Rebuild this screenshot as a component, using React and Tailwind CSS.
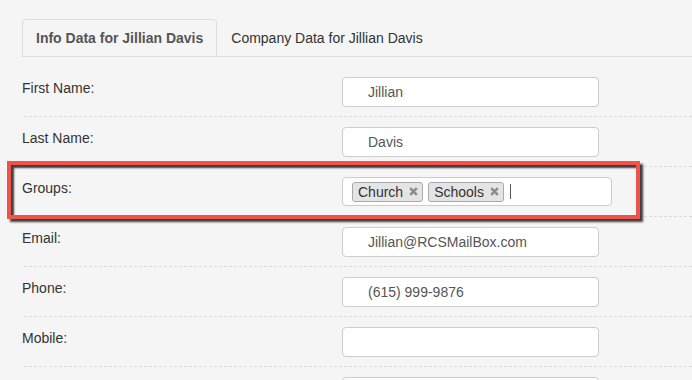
import React from "react";

function XIcon() {
  return (
    <svg width="9" height="9" viewBox="0 0 9 9" className="block">
      <path d="M1.2 1.2 L7.8 7.8 M7.8 1.2 L1.2 7.8" stroke="#8a8a8a" strokeWidth="2.4" strokeLinecap="butt" />
    </svg>
  );
}

function Tag({ label }) {
  return (
    <div className="flex h-[20px] items-center rounded-[3px] border border-[#aaa] bg-[#e4e4e4] pl-[5px] pr-[4px] text-[#333] leading-none">
      <span>{label}</span>
      <span className="ml-[6px]">
        <XIcon />
      </span>
    </div>
  );
}

function Row({ label, value, children, overlay }) {
  return (
    <div className="relative flex items-start bg-[linear-gradient(to_right,#cfcfcf_2px,transparent_2px)] bg-[length:5px_1px] bg-bottom bg-repeat-x pt-[10px] pb-[10px]">
      <div className="w-[320px] pt-px leading-5 text-[#333]">{label}</div>
      {children ? (
        children
      ) : (
        <div className="h-[30px] w-[257px] rounded-[4px] border border-[#ccc] bg-white pl-[25px] leading-[28px] text-[#555]">
          {value}
        </div>
      )}
      {overlay}
    </div>
  );
}

export default function App() {
  return (
    <div className="h-[380px] overflow-hidden bg-[#f5f5f5] pl-[22px] pt-[19px] font-['Liberation_Sans',Arial,sans-serif] text-[14px]">
      <div className="flex border-b border-[#ddd]">
        <div className="mr-[2px] rounded-t-[4px] border border-b-0 border-[#ddd] px-[13px] py-2 font-bold leading-5 text-[#555]">
          Info Data for Jillian Davis
        </div>
        <div className="border border-b-0 border-transparent px-[11px] py-2 leading-5 text-[#333]">
          Company Data for Jillian Davis
        </div>
      </div>
      <div className="pt-[10px]">
        <Row label="First Name:" value="Jillian" />
        <Row label="Last Name:" value="Davis" />
        <Row
          label="Groups:"
          overlay={
            <div className="pointer-events-none absolute left-[-15px] top-[-6px] h-[58px] w-[633px] border-[4px] border-[#f1524a] shadow-[3px_3px_2px_rgba(0,0,0,0.75),inset_3px_3px_2px_rgba(0,0,0,0.75)]" />
          }
        >
          <div className="mb-px flex h-[29px] w-[270px] items-center gap-[5px] rounded-[4px] border border-[#ccc] bg-white pl-[9px]">
            <Tag label="Church" />
            <Tag label="Schools" />
            <div className="ml-[1px] h-[15px] w-px bg-[#555]" />
          </div>
        </Row>
        <Row label="Email:" value="Jillian@RCSMailBox.com" />
        <Row label="Phone:" value="(615) 999-9876" />
        <Row label="Mobile:" value="" />
        <Row label="" value="" />
      </div>
    </div>
  );
}
